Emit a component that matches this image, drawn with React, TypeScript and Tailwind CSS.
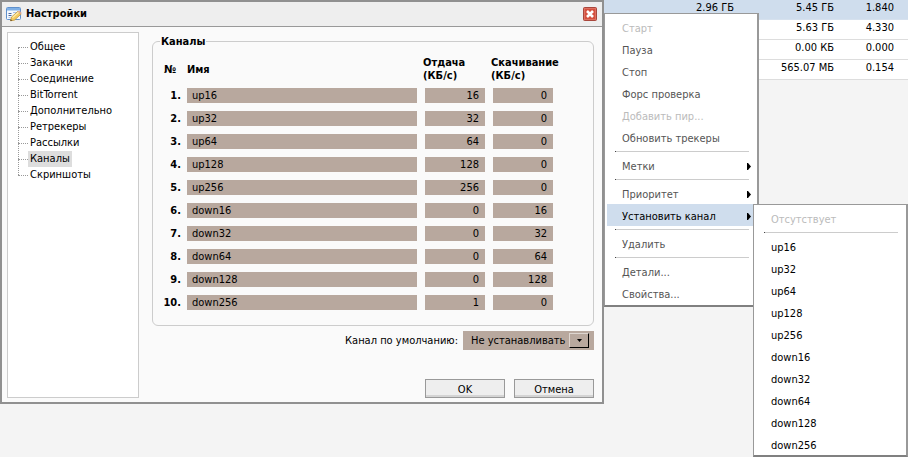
import React from "react";

const NAV = ["Общее", "Закачки", "Соединение", "BitTorrent", "Дополнительно", "Ретрекеры", "Рассылки", "Каналы", "Скриншоты"];

const CHANNELS: [string, number, number][] = [
  ["up16", 16, 0],
  ["up32", 32, 0],
  ["up64", 64, 0],
  ["up128", 128, 0],
  ["up256", 256, 0],
  ["down16", 0, 16],
  ["down32", 0, 32],
  ["down64", 0, 64],
  ["down128", 0, 128],
  ["down256", 1, 0],
];

const TORRENTS = [
  ["2.96 ГБ", "5.45 ГБ", "1.840"],
  ["", "5.63 ГБ", "4.330"],
  ["", "0.00 КБ", "0.000"],
  ["", "565.07 МБ", "0.154"],
];

type Entry = { label?: string; disabled?: boolean; arrow?: boolean; active?: boolean };

const MENU: Entry[] = [
  { label: "Старт", disabled: true },
  { label: "Пауза" },
  { label: "Стоп" },
  { label: "Форс проверка" },
  { label: "Добавить пир...", disabled: true },
  { label: "Обновить трекеры" },
  {},
  { label: "Метки", arrow: true },
  {},
  { label: "Приоритет", arrow: true },
  { label: "Установить канал", arrow: true, active: true },
  {},
  { label: "Удалить" },
  {},
  { label: "Детали..." },
  { label: "Свойства..." },
];

const SUBMENU: Entry[] = [
  { label: "Отсутствует", disabled: true },
  {},
  ...CHANNELS.map(([name]) => ({ label: name })),
];

function FormIcon() {
  return (
    <svg className="h-4 w-4 shrink-0" viewBox="0 0 16 16" aria-hidden="true">
      <rect x="0.5" y="1.5" width="14" height="12" rx="1" fill="#f4f8fd" stroke="#5f90cc" />
      <rect x="1" y="2" width="13" height="2.5" fill="#7fb0e6" />
      <path d="M2.5 7.5h3M2.5 9.5h3" stroke="#4a68a0" />
      <path d="M7 6.5h5M2.5 11.5h2" stroke="#a9c3e6" />
      <path d="M4.5 14.8l1-3.8 6.4-5.6 2.9 2.9-6.3 5.8z" fill="#f3cb62" stroke="#c39436" strokeWidth="0.8" />
      <path d="M6.5 11.6l6-5.3" stroke="#fdeeb0" strokeWidth="1.2" />
      <path d="M11.9 5.4l1.2-1 2.7 2.7-1 1.2z" fill="#e0a58c" />
      <path d="M4.3 15l.5-1.8 1.5 1.4z" fill="#5a4524" />
    </svg>
  );
}

function CloseIcon() {
  return (
    <svg className="h-3.5 w-3.5" viewBox="0 0 14 14" aria-hidden="true">
      <rect x="0.5" y="0.5" width="13" height="13" rx="1" fill="#d4503e" stroke="#a8463c" />
      <rect x="1.5" y="1.5" width="11" height="11" fill="none" stroke="#de7060" />
      <path d="M4 4l6 6M10 4l-6 6" stroke="#fff" strokeWidth="2.6" />
    </svg>
  );
}

function MenuList({ items, strong }: { items: Entry[]; strong?: boolean }) {
  return (
    <ul role="menu" className="pt-0.5 pl-0.5">
      {items.map((item, i) =>
        item.label ? (
          <li key={i} role="none">
            <button
              type="button"
              role="menuitem"
              disabled={item.disabled}
              className={
                "flex h-[22px] w-full items-center justify-between pt-1 pr-1.5 pl-[15px] text-left " +
                (item.active ? "bg-[#cfdded] text-black" : item.disabled ? "text-[#bbb]" : strong ? "text-black" : "text-[#555]")
              }
            >
              {item.label}
              {item.arrow && (
                <svg className="mb-0.5 h-[7px] w-1" viewBox="0 0 4 7" aria-hidden="true">
                  <path d="M0 0h1l3 3.5L1 7H0z" fill="#000" />
                </svg>
              )}
            </button>
          </li>
        ) : (
          <li key={i} role="separator" className="flex h-1.5 items-center px-2">
            <div className="h-px w-full border-l border-[#444] bg-[#ccc]" />
          </li>
        ),
      )}
    </ul>
  );
}

const FIELD = "block h-[15px] w-full bg-[#b8a89e] outline-none";

export default function App() {
  return (
    <div className="relative min-h-screen overflow-hidden bg-[#f4f4f4] font-['DejaVu_Sans_Condensed','DejaVu_Sans',sans-serif] text-[11px] leading-4 text-black">
      <table className="w-full table-fixed border-separate border-spacing-0 text-right">
        <tbody>
          {TORRENTS.map((row, i) => (
            <tr key={i} className={i === 0 ? "bg-[#cfdded]" : "bg-white"}>
              {row.map((cell, j) => (
                <td
                  key={j}
                  className={
                    "h-5 border-b p-0 align-top " +
                    (i === 0 ? "border-[#d6e1ee] " : "border-[#ddd] ") +
                    (j === 0 ? "" : j === 1 ? "w-[100px]" : "w-[74px] pr-3.5")
                  }
                >
                  {cell}
                </td>
              ))}
            </tr>
          ))}
        </tbody>
      </table>

      <nav className="absolute top-[13px] left-[603px] w-[156px] border-t border-r-2 border-b-2 border-l-2 border-[#999] border-b-[#808080] bg-white pb-px">
        <MenuList items={MENU} />
      </nav>
      <nav className="absolute top-[204px] left-[753px] w-[155px] border-t border-r-2 border-b-2 border-l border-[#999] border-b-[#808080] bg-white">
        <MenuList items={SUBMENU} strong />
      </nav>

      <section className="absolute top-0 left-0 flex w-[604px] flex-col border-2 border-[#909090] bg-[#fafafa]" role="dialog" aria-labelledby="title">
        <header className="flex h-[25px] items-center border-b border-[#999] bg-[#eee] pr-[5px] pl-1">
          <FormIcon />
          <h1 id="title" className="grow pl-1 font-bold">Настройки</h1>
          <button type="button" aria-label="Закрыть">
            <CloseIcon />
          </button>
        </header>

        <div className="flex gap-[13px] pt-[5px] pr-2 pb-1 pl-[5px]">
          <aside className="w-[132px] shrink-0 border border-[#ccc] bg-white pt-1.5 pl-2.5">
            <ul className="relative">
              <li className="absolute top-2 bottom-2 left-0 border-l border-dotted border-[#999]" aria-hidden="true" />
              {NAV.map((n) => (
                <li key={n} className="flex h-4 items-center">
                  <span className="w-2.5 border-t border-dotted border-[#999]" />
                  <a href="#" className={n === "Каналы" ? "bg-[#ddd] px-0.5" : "px-0.5"}>
                    {n}
                  </a>
                </li>
              ))}
            </ul>
          </aside>

          <div className="flex grow flex-col">
            <fieldset className="rounded-md border border-[#ccc] pr-10 pb-[11px] pl-[7px]">
              <legend className="px-px pt-0.5 font-bold">Каналы</legend>
              <table className="w-full table-fixed border-collapse">
                <thead>
                  <tr className="h-[34px] text-left leading-[13px]">
                    <th className="w-[27px] p-0 pt-1 pl-1">№</th>
                    <th className="p-0 pt-1">Имя</th>
                    <th className="w-[68px] p-0 pt-1 pl-1.5">Отдача (КБ/с)</th>
                    <th className="w-[68px] p-0 pt-1 pl-1.5">Скачивание (КБ/с)</th>
                  </tr>
                </thead>
                <tbody>
                  {CHANNELS.map(([name, up, down], i) => (
                    <tr key={name} className="h-[23px]">
                      <th className="p-0 pr-1.5 text-right whitespace-nowrap">{i + 1}.</th>
                      <td className="p-0">
                        <input aria-label="Имя" defaultValue={name} className={FIELD + " pl-[5px]"} />
                      </td>
                      <td className="p-0 pl-2">
                        <input aria-label="Отдача" defaultValue={up} className={FIELD + " pr-1.5 text-right"} />
                      </td>
                      <td className="p-0 pl-2">
                        <input aria-label="Скачивание" defaultValue={down} className={FIELD + " pr-1.5 text-right"} />
                      </td>
                    </tr>
                  ))}
                </tbody>
              </table>
            </fieldset>

            <div className="mt-[5px] flex items-center justify-end gap-[5px]">
              <label htmlFor="default-channel">Канал по умолчанию:</label>
              <div className="relative">
                <select id="default-channel" className="block h-[19px] w-[131px] appearance-none bg-[#b8a89e] pl-2 outline-none">
                  <option>Не устанавливать</option>
                </select>
                <span className="pointer-events-none absolute top-0.5 right-[5px] flex h-[15px] w-5 items-center justify-center border border-t-[#ded6d0] border-r-black border-b-black border-l-[#ded6d0]">
                  <svg className="h-[3px] w-[5px]" viewBox="0 0 5 3" aria-hidden="true">
                    <path d="M0 0h5L2.5 3z" fill="#000" />
                  </svg>
                </span>
              </div>
            </div>

            <div className="mt-[29px] flex justify-end gap-[9px]">
              {["OK", "Отмена"].map((t) => (
                <button key={t} type="button" className="h-[19px] w-20 border border-[#999] bg-[#eee] pt-0.5 shadow-[inset_0_-2px_0_#d4d4d4]">
                  {t}
                </button>
              ))}
            </div>
          </div>
        </div>
      </section>
    </div>
  );
}
